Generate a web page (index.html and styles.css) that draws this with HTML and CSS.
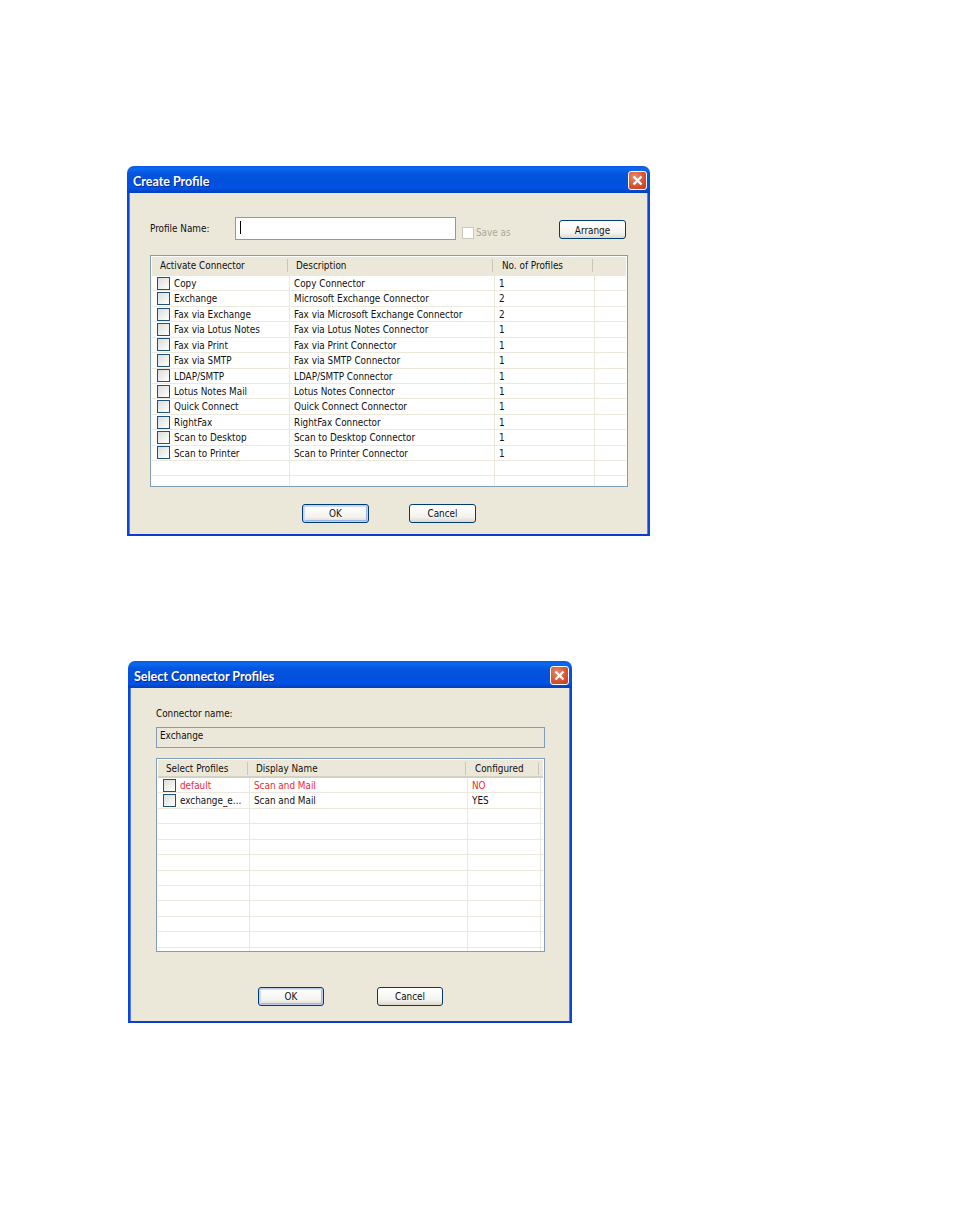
FILE: index.html
```html
<!DOCTYPE html>
<html lang="en">
<head>
<meta charset="utf-8">
<title>Dialogs</title>
<link rel="stylesheet" href="styles.css">
</head>
<body>
<section class="dialog dialog-create">
  <header class="titlebar"><span class="title">Create Profile</span>
    <span class="close"><svg width="17" height="17" viewBox="0 0 17 17"><path d="M4.5 4.5l8 8M12.5 4.5l-8 8" stroke="#fff" stroke-width="2.4" fill="none"/></svg></span>
  </header>
  <div class="body">
    <div class="name-row">
      <span class="label name-label">Profile Name:</span>
      <span class="input"><i class="caret"></i></span>
      <span class="saveas"><i class="check disabled"></i>Save as</span>
      <button class="btn arrange">Arrange</button>
    </div>
    <div class="table t1">
      <div class="thead"><span>Activate Connector</span><span>Description</span><span>No. of Profiles</span><span></span></div>
      <div class="row"><span class="first"><i class="check"></i>Copy</span><span>Copy Connector</span><span>1</span><span></span></div>
      <div class="row"><span class="first"><i class="check"></i>Exchange</span><span>Microsoft Exchange Connector</span><span>2</span><span></span></div>
      <div class="row"><span class="first"><i class="check"></i>Fax via Exchange</span><span>Fax via Microsoft Exchange Connector</span><span>2</span><span></span></div>
      <div class="row"><span class="first"><i class="check"></i>Fax via Lotus Notes</span><span>Fax via Lotus Notes Connector</span><span>1</span><span></span></div>
      <div class="row"><span class="first"><i class="check"></i>Fax via Print</span><span>Fax via Print Connector</span><span>1</span><span></span></div>
      <div class="row"><span class="first"><i class="check"></i>Fax via SMTP</span><span>Fax via SMTP Connector</span><span>1</span><span></span></div>
      <div class="row"><span class="first"><i class="check"></i>LDAP/SMTP</span><span>LDAP/SMTP Connector</span><span>1</span><span></span></div>
      <div class="row"><span class="first"><i class="check"></i>Lotus Notes Mail</span><span>Lotus Notes Connector</span><span>1</span><span></span></div>
      <div class="row"><span class="first"><i class="check"></i>Quick Connect</span><span>Quick Connect Connector</span><span>1</span><span></span></div>
      <div class="row"><span class="first"><i class="check"></i>RightFax</span><span>RightFax Connector</span><span>1</span><span></span></div>
      <div class="row"><span class="first"><i class="check"></i>Scan to Desktop</span><span>Scan to Desktop Connector</span><span>1</span><span></span></div>
      <div class="row"><span class="first"><i class="check"></i>Scan to Printer</span><span>Scan to Printer Connector</span><span>1</span><span></span></div>
      <div class="row"><span></span><span></span><span></span><span></span></div>
      <div class="row last"><span></span><span></span><span></span><span></span></div>
    </div>
    <div class="actions a1"><button class="btn default">OK</button><button class="btn">Cancel</button></div>
  </div>
</section>

<section class="dialog dialog-select">
  <header class="titlebar"><span class="title">Select Connector Profiles</span>
    <span class="close"><svg width="17" height="17" viewBox="0 0 17 17"><path d="M4.5 4.5l8 8M12.5 4.5l-8 8" stroke="#fff" stroke-width="2.4" fill="none"/></svg></span>
  </header>
  <div class="body">
    <div class="label conn-label">Connector name:</div>
    <div class="field">Exchange</div>
    <div class="table t2">
      <div class="thead"><span>Select Profiles</span><span>Display Name</span><span>Configured</span><span></span></div>
      <div class="row red"><span class="first"><i class="check"></i>default</span><span>Scan and Mail</span><span>NO</span><span></span></div>
      <div class="row"><span class="first"><i class="check"></i>exchange_e...</span><span>Scan and Mail</span><span>YES</span><span></span></div>
      <div class="row"><span></span><span></span><span></span><span></span></div>
      <div class="row"><span></span><span></span><span></span><span></span></div>
      <div class="row"><span></span><span></span><span></span><span></span></div>
      <div class="row"><span></span><span></span><span></span><span></span></div>
      <div class="row"><span></span><span></span><span></span><span></span></div>
      <div class="row"><span></span><span></span><span></span><span></span></div>
      <div class="row"><span></span><span></span><span></span><span></span></div>
      <div class="row"><span></span><span></span><span></span><span></span></div>
      <div class="row"><span></span><span></span><span></span><span></span></div>
      <div class="row last"><span></span><span></span><span></span><span></span></div>
    </div>
    <div class="actions a2"><button class="btn default">OK</button><button class="btn">Cancel</button></div>
  </div>
</section>
</body>
</html>
```
FILE: styles.css
```css
* { box-sizing: border-box; }
html, body { margin: 0; background: #fff; }
body {
  padding: 166px 0 0 127px;
  height: 1227px;
  overflow: hidden;
  font-family: "DejaVu Sans Condensed", "DejaVu Sans", sans-serif;
  font-stretch: condensed;
  font-size: 9.85px;
  color: #111;
}
.dialog {
  display: flex;
  flex-direction: column;
  background: #ebe8d9;
  border-radius: 7px 7px 0 0;
  overflow: hidden;
}
.dialog-create { width: 523px; height: 370px; }
.dialog-select { width: 444px; height: 362px; margin: 125px 0 0 1px; }

.titlebar {
  flex: none;
  height: 27px;
  display: flex;
  align-items: flex-start;
  justify-content: space-between;
  padding: 5px 3px 0 6px;
  background: linear-gradient(180deg, #0a5ade 0, #0a6af0 3px, #0656e0 7px, #0250dc 16px, #0252e6 22px, #0140b8 27px);
}
.title {
  font-family: Lato, sans-serif;
  font-stretch: normal;
  font-weight: 700;
  font-size: 12.5px;
  line-height: 20px;
  padding-top: 1px;
  color: #fff;
  text-shadow: 1px 1px 0 #0a2a90;
}
.close {
  width: 19px;
  height: 19px;
  border: 1px solid #fff;
  border-radius: 3px;
  background: radial-gradient(circle at 35% 30%, #e88a6c, #d8502e 60%, #c23a18);
  display: flex;
  align-items: center;
  justify-content: center;
}
.close svg { flex: none; }

.body {
  flex: 1;
  position: relative;
  display: flex;
  flex-direction: column;
  border: solid #0b45dc;
  border-width: 0 2px 2px;
  border-bottom-color: #0a3cd0;
  box-shadow: inset 1px 0 0 #4f80ec, inset -1px 0 0 #4f80ec;
}
.dialog-create .body { padding: 24px 22px 0 21px; }
.dialog-select .body { padding: 19px 25px 0 26px; }

.label { line-height: 14px; }
.name-row { display: flex; align-items: flex-start; height: 23px; }
.name-label { width: 85px; margin-top: 5px; }
.input {
  width: 221px;
  height: 23px;
  background: #fff;
  border: 1px solid #7f9db9;
  padding: 3px 0 0 4px;
  flex: none;
}
.caret { display: block; width: 1px; height: 13px; background: #000; }
.saveas {
  display: flex;
  align-items: center;
  width: 97px;
  margin: 9px 0 0 6px;
  color: #aca899;
  line-height: 14px;
  gap: 2px;
}
.btn {
  width: 67px;
  height: 19px;
  padding: 0;
  border: 1px solid #003c74;
  border-radius: 3px;
  background: linear-gradient(180deg, #fff, #f4f3ee 70%, #dcd8cc);
  font: inherit;
  color: #111;
}
.btn.default { box-shadow: inset 0 0 0 1px #c0d0f0, inset 1px 1px 0 1px #cedcf6, inset -1px -1px 0 1px #9db5e8; }
.arrange { margin-top: 3px; padding-top: 1px; }

.check {
  flex: none;
  display: block;
  width: 13px;
  height: 13px;
  border: 1px solid #1c5180;
  background: linear-gradient(135deg, #dcdcd7, #fff);
}
.check.disabled { width: 12px; height: 12px; border-color: #cac8bb; background: #fff; }

.table {
  flex: none;
  display: flex;
  flex-direction: column;
  border: 1px solid #7f9db9;
  background: #fff;
  padding: 1px 1px 0;
  overflow: hidden;
}
.t1 { width: 478px; height: 232px; margin-top: 15px; }
.t2 { width: 389px; height: 194px; margin-top: 10px; }

.thead, .row { display: flex; flex: none; }
.thead {
  height: 19px;
  padding-bottom: 2px;
  background: #ebe8d9;
  align-items: center;
}
.t2 .thead { height: 18px; padding-bottom: 2px; box-shadow: inset 0 -2px 0 #d5d1c2; }
.thead span {
  flex: none;
  height: 13px;
  line-height: 13px;
  border-right: 1px solid #cbc7b8;
  white-space: nowrap;
}
.thead span:last-child { border-right: 0; }

.row { height: 15.43px; border-bottom: 1px solid #ece9dc; line-height: 15.5px; }
.row span {
  flex: none;
  height: 100%;
  border-right: 1px solid #ece9dc;
  padding-left: 4px;
  white-space: nowrap;
}
.row .first {
  display: flex;
  align-items: flex-start;
  gap: 4px;
  padding-left: 5px;
}
.row .first .check { align-self: center; }
.row span:last-child { border-right: 0; }
.row.last { border-bottom: 0; }
.red { color: #f0282e; }

.t1 .thead span:nth-child(1) { width: 136px; padding-left: 8px; }
.t1 .thead span:nth-child(2) { width: 205px; padding-left: 8px; }
.t1 .thead span:nth-child(3) { width: 100px; padding-left: 9px; }
.t1 .row span:nth-child(1) { width: 138px; }
.t1 .row span:nth-child(2) { width: 205px; }
.t1 .row span:nth-child(3) { width: 100px; }
.t1 .row span:nth-child(4) { width: 31px; }
.t1 .row { width: 474px; }

.t2 .thead span:nth-child(1) { width: 90px; padding-left: 8px; }
.t2 .thead span:nth-child(2) { width: 218px; padding-left: 8px; }
.t2 .thead span:nth-child(3) { width: 73px; padding-left: 9px; }
.t2 .row span:nth-child(1) { width: 92px; }
.t2 .row span:nth-child(2) { width: 218px; }
.t2 .row span:nth-child(3) { width: 73px; }
.t2 .row span:nth-child(4) { width: 2px; padding: 0; }

.field {
  height: 21px;
  width: 389px;
  margin-top: 6px;
  border: 1px solid #7f9db9;
  padding: 0 0 0 3px;
  line-height: 15px;
}

.actions { display: flex; flex: none; }
.a1 { margin: 17px 0 0 152px; gap: 40px; }
.a2 { margin: 35px 0 0 102px; gap: 53px; }
.a2 .btn { width: 66px; }
```
